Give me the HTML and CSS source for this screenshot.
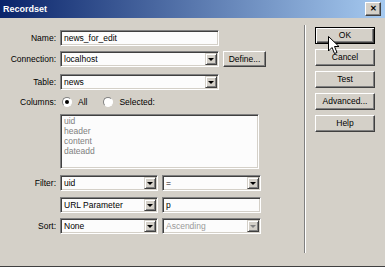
FILE: index.html
```html
<!DOCTYPE html>
<html>
<head>
  <title>Recordset</title>
  <link rel="stylesheet" href="styles.css">
</head>
<body>
  <div class="dialog">
    <div class="titlebar">
      <span class="title">Recordset</span>
      <span class="close">&#x2715;</span>
    </div>
    <div class="main">
      <div class="form">
        <div class="row r-name">
          <span class="lbl">Name:</span>
          <div class="field w-long">news_for_edit</div>
        </div>
        <div class="row r-conn">
          <span class="lbl">Connection:</span>
          <div class="field select w-long">localhost<span class="arrow"></span></div>
          <div class="btn define">Define...</div>
        </div>
        <div class="row r-table">
          <span class="lbl">Table:</span>
          <div class="field select w-long">news<span class="arrow"></span></div>
        </div>
        <div class="row r-cols">
          <span class="lbl">Columns:</span>
          <span class="radio on"></span><span class="opt">All</span>
          <span class="radio"></span><span class="opt">Selected:</span>
        </div>
        <div class="row r-list">
          <span class="lbl"></span>
          <div class="field list">
            <div>uid</div>
            <div>header</div>
            <div>content</div>
            <div>dateadd</div>
          </div>
        </div>
        <div class="row r-filter">
          <span class="lbl">Filter:</span>
          <div class="field select w-half">uid<span class="arrow"></span></div>
          <div class="field select w-half2">=<span class="arrow"></span></div>
        </div>
        <div class="row r-param">
          <span class="lbl"></span>
          <div class="field select w-half">URL Parameter<span class="arrow"></span></div>
          <div class="field w-half2">p</div>
        </div>
        <div class="row r-sort">
          <span class="lbl">Sort:</span>
          <div class="field select w-half">None<span class="arrow"></span></div>
          <div class="field select w-half2 disabled">Ascending<span class="arrow"></span></div>
        </div>
      </div>
      <div class="sep"></div>
      <div class="buttons">
        <div class="btn default">OK</div>
        <div class="btn">Cancel</div>
        <div class="btn">Test</div>
        <div class="btn">Advanced...</div>
        <div class="btn">Help</div>
      </div>
    </div>
    <svg class="cursor" width="12" height="19" viewBox="0 0 12 19">
      <path d="M0.5 0.5 L0.5 15 L4 11.5 L6.5 17.5 L9 16.5 L6.5 10.5 L11 10.5 Z" fill="#fff" stroke="#000" stroke-width="1"/>
    </svg>
  </div>
</body>
</html>
```

FILE: styles.css
```css
body { margin: 0; background: #d4d0c8; font-family: "Liberation Sans", Arial, sans-serif; font-size: 8.5px; color: #000; }
.dialog { position: relative; width: 385px; height: 266px; background: #d4d0c8; border-bottom: 1px solid #404040; overflow: hidden; }
.titlebar {
  height: 18px;
  background: linear-gradient(to right, #0a246a, #a6caf0);
  display: flex; align-items: center; justify-content: space-between;
  padding: 0 4px 0 3px;
}
.title { color: #fff; font-weight: bold; font-size: 9px; }
.close {
  width: 14px; height: 12px; background: #d4d0c8;
  border: 1px solid; border-color: #fff #404040 #404040 #fff;
  box-shadow: inset -1px -1px #808080;
  font-size: 8px; font-weight: bold; text-align: center; line-height: 12px;
}
.main { display: flex; }
.form { width: 304px; padding-top: 12px; }
.row { display: flex; align-items: center; margin-bottom: 5px; }
.lbl { width: 56px; text-align: right; padding-right: 4px; flex: none; color: #000; }
.field {
  position: relative; box-sizing: border-box; height: 16px;
  background: #fcfcfc;
  border: 1px solid; border-color: #808080 #fff #fff #808080;
  box-shadow: inset 1px 1px #404040, inset -1px -1px #d4d0c8;
  padding: 0 3px; line-height: 14px; white-space: nowrap; overflow: hidden;
}
.w-long { width: 159px; }
.w-half { width: 98px; }
.w-half2 { width: 99px; margin-left: 4px; }
.arrow {
  position: absolute; right: 1px; top: 1px; width: 12px; height: 12px;
  background: #d4d0c8;
  border: 1px solid; border-color: #d4d0c8 #404040 #404040 #d4d0c8;
  box-sizing: border-box; box-shadow: inset 1px 1px #fff, inset -1px -1px #808080;
}
.arrow::after {
  content: ""; position: absolute; left: 2px; top: 4px;
  border-left: 3px solid transparent; border-right: 3px solid transparent; border-top: 3px solid #000;
}
.disabled { color: #9a9a9a; }
.disabled .arrow::after { border-top-color: #808080; }
.btn {
  box-sizing: border-box; height: 16px; background: #d4d0c8; text-align: center; line-height: 14px;
  border: 1px solid; border-color: #fff #404040 #404040 #fff;
  box-shadow: inset -1px -1px #808080;
}
.define { width: 43px; margin-left: 4px; }
.r-name { margin-bottom: 5px; }
.r-conn { margin-bottom: 7px; }
.r-table { margin-bottom: 6px; }
.r-cols { height: 12px; margin-bottom: 6px; }
.radio {
  width: 10px; height: 10px; border-radius: 50%; box-sizing: border-box; background: #fff;
  border: 1px solid; border-color: #808080 #fff #fff #808080; position: relative; margin-left: 2px;
}
.radio.on::after { content: ""; position: absolute; left: 2px; top: 2px; width: 4px; height: 4px; border-radius: 50%; background: #000; }
.opt { margin-left: 6px; margin-right: 14px; }
.list { width: 199px; height: 55px; color: #808080; line-height: 10px; padding-top: 1px; }
.r-list { margin-bottom: 6px; }
.r-filter { margin-bottom: 6px; }
.r-param { margin-bottom: 5px; }
.sep { width: 1px; background: #808080; border-right: 1px solid #fff; margin: 7px 0 0; height: 228px; }
.buttons { display: flex; flex-direction: column; gap: 5px; padding: 9px 0 0 9px; }
.buttons .btn { width: 60px; height: 17px; line-height: 15px; }
.btn.default { border: 1px solid #000; box-shadow: inset 1px 1px #fff, inset -1px -1px #404040, inset -2px -2px #808080; }
.cursor { position: absolute; left: 328px; top: 36px; }
```
